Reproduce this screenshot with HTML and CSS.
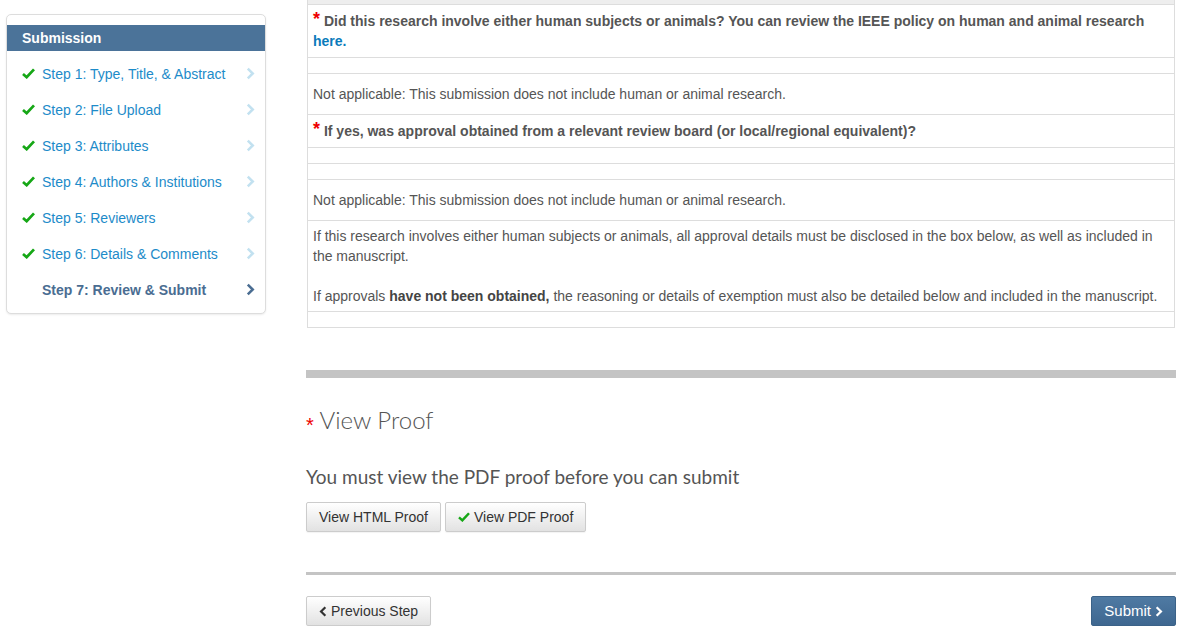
FILE: index.html
```html
<!DOCTYPE html>
<html>
<head>
<meta charset="utf-8">
<title>Review &amp; Submit</title>
<link rel="stylesheet" href="styles.css">
</head>
<body>
<div class="page">
  <aside class="sidebar">
    <div class="panel">
      <div class="panel-head">Submission</div>
      <ul class="steps">
        <li class="step done"><span class="ico"><svg viewBox="0 0 14 12" width="13" height="11"><path d="M1 6.5 L5 10 L13 1.5" fill="none" stroke="#16a716" stroke-width="3"/></svg></span><span class="lbl">Step 1: Type, Title, &amp; Abstract</span><svg class="chev" viewBox="0 0 10 14" width="9" height="13"><path d="M2 1.5 L7.5 7 L2 12.5" fill="none" stroke="currentColor" stroke-width="2.8"/></svg></li>
        <li class="step done"><span class="ico"><svg viewBox="0 0 14 12" width="13" height="11"><path d="M1 6.5 L5 10 L13 1.5" fill="none" stroke="#16a716" stroke-width="3"/></svg></span><span class="lbl">Step 2: File Upload</span><svg class="chev" viewBox="0 0 10 14" width="9" height="13"><path d="M2 1.5 L7.5 7 L2 12.5" fill="none" stroke="currentColor" stroke-width="2.8"/></svg></li>
        <li class="step done"><span class="ico"><svg viewBox="0 0 14 12" width="13" height="11"><path d="M1 6.5 L5 10 L13 1.5" fill="none" stroke="#16a716" stroke-width="3"/></svg></span><span class="lbl">Step 3: Attributes</span><svg class="chev" viewBox="0 0 10 14" width="9" height="13"><path d="M2 1.5 L7.5 7 L2 12.5" fill="none" stroke="currentColor" stroke-width="2.8"/></svg></li>
        <li class="step done"><span class="ico"><svg viewBox="0 0 14 12" width="13" height="11"><path d="M1 6.5 L5 10 L13 1.5" fill="none" stroke="#16a716" stroke-width="3"/></svg></span><span class="lbl">Step 4: Authors &amp; Institutions</span><svg class="chev" viewBox="0 0 10 14" width="9" height="13"><path d="M2 1.5 L7.5 7 L2 12.5" fill="none" stroke="currentColor" stroke-width="2.8"/></svg></li>
        <li class="step done"><span class="ico"><svg viewBox="0 0 14 12" width="13" height="11"><path d="M1 6.5 L5 10 L13 1.5" fill="none" stroke="#16a716" stroke-width="3"/></svg></span><span class="lbl">Step 5: Reviewers</span><svg class="chev" viewBox="0 0 10 14" width="9" height="13"><path d="M2 1.5 L7.5 7 L2 12.5" fill="none" stroke="currentColor" stroke-width="2.8"/></svg></li>
        <li class="step done"><span class="ico"><svg viewBox="0 0 14 12" width="13" height="11"><path d="M1 6.5 L5 10 L13 1.5" fill="none" stroke="#16a716" stroke-width="3"/></svg></span><span class="lbl">Step 6: Details &amp; Comments</span><svg class="chev" viewBox="0 0 10 14" width="9" height="13"><path d="M2 1.5 L7.5 7 L2 12.5" fill="none" stroke="currentColor" stroke-width="2.8"/></svg></li>
        <li class="step current"><span class="ico"></span><span class="lbl">Step 7: Review &amp; Submit</span><svg class="chev" viewBox="0 0 10 14" width="9" height="13"><path d="M2 1.5 L7.5 7 L2 12.5" fill="none" stroke="currentColor" stroke-width="2.8"/></svg></li>
      </ul>
    </div>
  </aside>

  <main class="main">
    <div class="qtable">
      <div class="row top-strip"></div>
      <div class="row q"><span class="req">*</span> Did this research involve either human subjects or animals? You can review the IEEE policy on human and animal research <a class="link" href="#">here.</a></div>
      <div class="row empty"></div>
      <div class="row ans">Not applicable: This submission does not include human or animal research.</div>
      <div class="row q"><span class="req">*</span> If yes, was approval obtained from a relevant review board (or local/regional equivalent)?</div>
      <div class="row empty"></div>
      <div class="row empty"></div>
      <div class="row ans">Not applicable: This submission does not include human or animal research.</div>
      <div class="row info">
        <p>If this research involves either human subjects or animals, all approval details must be disclosed in the box below, as well as included in the manuscript.</p>
        <p>If approvals <b>have not been obtained,</b> the reasoning or details of exemption must also be detailed below and included in the manuscript.</p>
      </div>
      <div class="row empty"></div>
    </div>

    <div class="thick-bar"></div>

    <h2 class="proof-title"><span class="req-sm">*</span> View Proof</h2>
    <p class="proof-note">You must view the PDF proof before you can submit</p>
    <div class="btn-row">
      <button class="btn">View HTML Proof</button>
      <button class="btn"><svg viewBox="0 0 14 12" width="12" height="10"><path d="M1 6.5 L5 10 L13 1.5" fill="none" stroke="#16a716" stroke-width="3"/></svg> View PDF Proof</button>
    </div>

    <div class="thin-bar"></div>

    <div class="nav-row">
      <button class="btn"><svg viewBox="0 0 10 14" width="8" height="11"><path d="M8 1.5 L2.5 7 L8 12.5" fill="none" stroke="#333" stroke-width="2.8"/></svg> Previous Step</button>
      <button class="btn btn-primary">Submit <svg viewBox="0 0 10 14" width="8" height="11"><path d="M2 1.5 L7.5 7 L2 12.5" fill="none" stroke="#fff" stroke-width="2.8"/></svg></button>
    </div>
  </main>
</div>
</body>
</html>
```

FILE: styles.css
```css
* { box-sizing: border-box; }

html, body {
  margin: 0;
  padding: 0;
  background: #fff;
}

body {
  font-family: "Liberation Sans", Arial, sans-serif;
  font-size: 14px;
  line-height: 20px;
  color: #555;
}

.page {
  display: flex;
  align-items: flex-start;
  gap: 40px;
  padding: 0 19px 0 6px;
}

/* Sidebar */
.sidebar {
  width: 260px;
  flex: 0 0 260px;
  padding-top: 14px;
}

.panel {
  border: 1px solid #ddd;
  border-radius: 5px;
  box-shadow: 0 1px 2px rgba(0, 0, 0, 0.08);
  padding: 10px 0 5px;
  background: #fff;
}

.panel-head {
  background: #4b7399;
  color: #fff;
  font-weight: bold;
  font-size: 14px;
  line-height: 26px;
  height: 26px;
  padding-left: 15px;
}

.steps {
  list-style: none;
  margin: 0;
  padding: 5px 0 0;
}

.step {
  display: flex;
  align-items: center;
  height: 36px;
  padding: 0 10px 0 15px;
}

.step .ico {
  width: 20px;
  flex: 0 0 20px;
  display: flex;
  align-items: center;
  margin-top: -2px;
}

.step .lbl {
  flex: 1;
  color: #1d8bc9;
}

.step .chev {
  color: #c2e1f0;
  margin-top: -2px;
}

.step.current .lbl {
  color: #4a6d92;
  font-weight: bold;
}

.step.current .chev {
  color: #4a6d92;
}

/* Main */
.main {
  width: 870px;
  flex: 0 0 870px;
}

.qtable {
  margin: 0 1px;
  border-left: 1px solid #ddd;
  border-right: 1px solid #ddd;
  border-bottom: 1px solid #ddd;
}

.row {
  border-top: 1px solid #ddd;
  padding: 0 5px;
}

.row.top-strip {
  border-top: 0;
  height: 4px;
  background: #eee;
}

.row.q {
  padding-top: 6px;
  padding-bottom: 6px;
  font-weight: bold;
  color: #555;
}

.req {
  color: #e00;
  font-size: 18px;
  line-height: 0;
  font-weight: bold;
  vertical-align: 1px;
}

.link {
  color: #0b7bbb;
  text-decoration: none;
  font-weight: bold;
}

.row.empty {
  height: 16px;
}

.row.ans {
  padding-top: 10px;
  padding-bottom: 10px;
}

.row.info {
  padding-top: 5px;
  padding-bottom: 5px;
}

.row.info p {
  margin: 0;
}

.row.info p + p {
  margin-top: 20px;
}

.row.info b {
  color: #444;
}

.thick-bar {
  margin-top: 42px;
  height: 8px;
  background: #c4c4c4;
}

.proof-title {
  margin: 27px 0 0;
  font-family: Lato, "Liberation Sans", sans-serif;
  font-weight: 300;
  font-size: 24px;
  line-height: 30px;
  height: 30px;
  color: #555;
}

.req-sm {
  color: #e00;
  font-family: "Liberation Sans", Arial, sans-serif;
  font-size: 20px;
  line-height: 0;
  font-weight: 400;
  vertical-align: -3px;
}

.proof-note {
  margin: 30px 0 0;
  font-family: Lato, "Liberation Sans", sans-serif;
  font-size: 19px;
  line-height: 24px;
  color: #555;
}

.btn-row {
  display: flex;
  gap: 4px;
  margin-top: 13px;
}

.btn {
  font-family: "Liberation Sans", Arial, sans-serif;
  font-size: 14px;
  line-height: 20px;
  height: 30px;
  padding: 4px 12px;
  color: #333;
  background: linear-gradient(#fff, #e2e2e2);
  border: 1px solid #ccc;
  border-radius: 2px;
  box-shadow: 0 1px 1px rgba(0, 0, 0, 0.05);
  display: inline-flex;
  align-items: center;
  gap: 4px;
}

.thin-bar {
  margin-top: 40px;
  height: 3px;
  background: #c4c4c4;
}

.nav-row {
  display: flex;
  justify-content: space-between;
  margin-top: 21px;
}

.btn-primary {
  color: #fff;
  font-size: 15px;
  padding: 4px 12px;
  background: linear-gradient(#4f7aa3, #3e6790);
  border-color: #3b6288;
}
```
